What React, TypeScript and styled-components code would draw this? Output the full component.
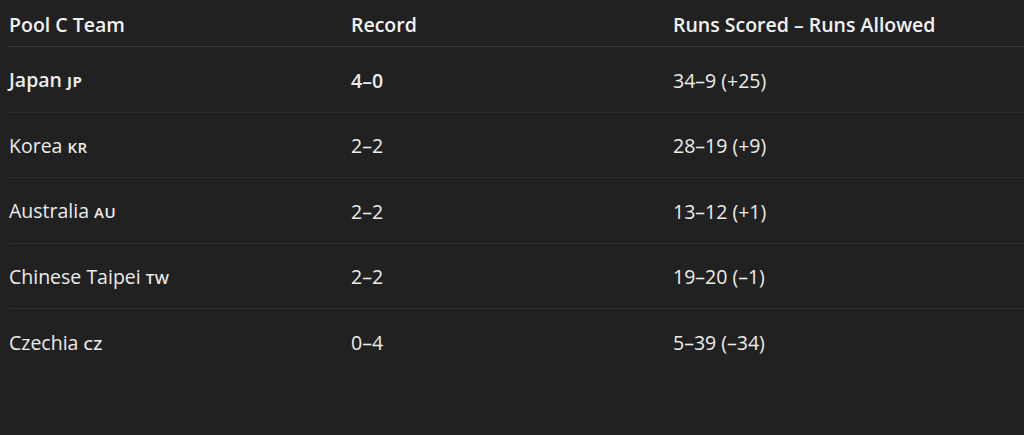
import React from "react";
import styled, { createGlobalStyle } from "styled-components";

const Global = createGlobalStyle`
  html, body { margin: 0; padding: 0; background: #212121; }
  body { font-family: "Open Sans", "Noto Sans", sans-serif; color: #ececec; }
`;

const Page = styled.div`
  padding: 0 0 0 9px;
  min-height: 435px;
  box-sizing: border-box;
  overflow: hidden;
`;

const Table = styled.div`
  display: grid;
  grid-template-columns: 342px 322px 1fr;
`;

const HeadCell = styled.div`
  box-sizing: border-box;
  height: 47px;
  display: flex;
  align-items: center;
  padding-top: 3px;
  font-size: 19.5px;
  font-weight: 600;
  line-height: 26px;
  border-bottom: 1px solid #3b3b3b;
  color: #f2f2f2;
  white-space: nowrap;
`;

const Cell = styled.div<{ $last?: boolean; $bold?: boolean }>`
  box-sizing: border-box;
  height: 65.5px;
  display: flex;
  align-items: center;
  padding-top: 3px;
  font-size: 19.5px;
  line-height: 26px;
  font-weight: ${(p) => (p.$bold ? 600 : 400)};
  border-bottom: ${(p) => (p.$last ? "none" : "1px solid #2d2d2d")};
  color: #ececec;
  white-space: pre;
`;

const Code = styled.span<{ $bold?: boolean }>`
  font-size: 15px;
  font-weight: ${(p) => (p.$bold ? 700 : 600)};
  letter-spacing: 0.5px;
`;

const TeamText = styled.span``;

const rows = [
  { team: "Japan", code: "JP", rec: "4–0", runs: "34–9 (+25)", bold: true },
  { team: "Korea", code: "KR", rec: "2–2", runs: "28–19 (+9)" },
  { team: "Australia", code: "AU", rec: "2–2", runs: "13–12 (+1)" },
  { team: "Chinese Taipei", code: "TW", rec: "2–2", runs: "19–20 (–1)" },
  { team: "Czechia", code: "CZ", rec: "0–4", runs: "5–39 (–34)" },
];

export default function App() {
  return (
    <Page>
      <Global />
      <Table>
        <HeadCell>Pool C Team</HeadCell>
        <HeadCell>Record</HeadCell>
        <HeadCell>Runs Scored – Runs Allowed</HeadCell>
        {rows.map((r, i) => {
          const last = i === rows.length - 1;
          return (
            <React.Fragment key={r.team}>
              <Cell $last={last} $bold={r.bold}>
                <TeamText>
                  {r.team} <Code $bold={r.bold}>{r.code}</Code>
                </TeamText>
              </Cell>
              <Cell $last={last} $bold={r.bold}>{r.rec}</Cell>
              <Cell $last={last}>{r.runs}</Cell>
            </React.Fragment>
          );
        })}
      </Table>
    </Page>
  );
}
